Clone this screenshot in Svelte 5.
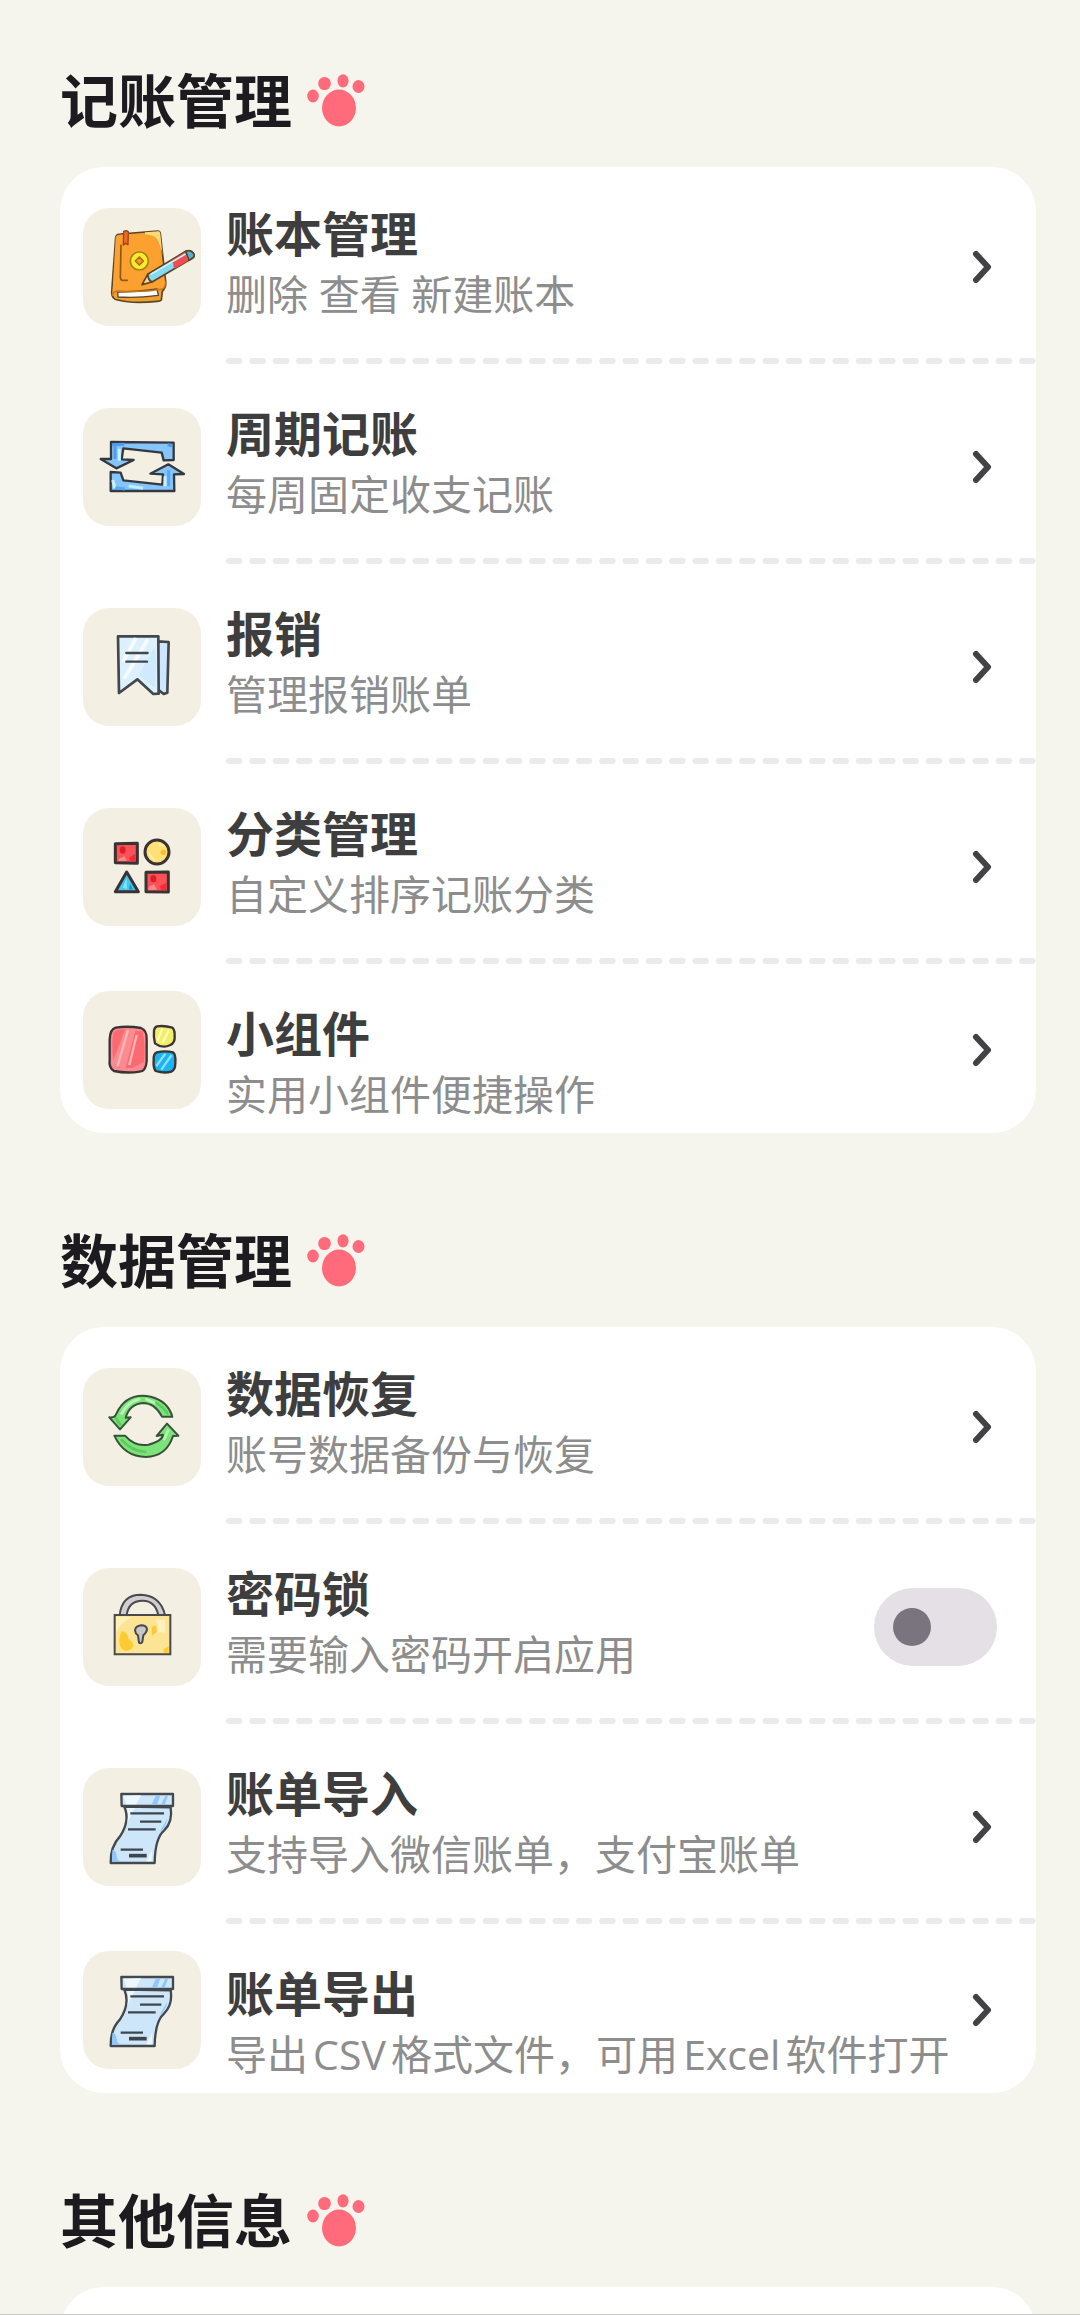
<script>
    let passwordLock = $state(false);

    const sections = [
        {
            name: "记账管理",
            items: [
                { id: "books", icon: "book", title: "账本管理", desc: "删除 查看 新建账本" },
                { id: "recurring", icon: "repeat", title: "周期记账", desc: "每周固定收支记账" },
                { id: "reimburse", icon: "bookmark", title: "报销", desc: "管理报销账单" },
                { id: "category", icon: "shapes", title: "分类管理", desc: "自定义排序记账分类" },
                { id: "widget", icon: "widget", title: "小组件", desc: "实用小组件便捷操作" },
            ],
        },
        {
            name: "数据管理",
            items: [
                { id: "restore", icon: "sync", title: "数据恢复", desc: "账号数据备份与恢复" },
                { id: "lock", icon: "lock", title: "密码锁", desc: "需要输入密码开启应用", toggle: true },
                { id: "import", icon: "bill", title: "账单导入", desc: "支持导入微信账单，支付宝账单" },
                { id: "export", icon: "bill", title: "账单导出", desc: "导出CSV格式文件，可用Excel软件打开" },
            ],
        },
        { name: "其他信息", items: [] },
    ];
</script>

{#snippet paw()}
    <svg class="paw" viewBox="0 0 58 54" aria-hidden="true">
        <ellipse cx="32" cy="34" rx="17" ry="18.5" />
        <ellipse cx="6" cy="22" rx="5.8" ry="6.4" />
        <ellipse cx="17.5" cy="9.5" rx="6.3" ry="6.6" />
        <ellipse cx="36" cy="6.8" rx="5.6" ry="6.6" />
        <ellipse cx="51.5" cy="12.5" rx="6" ry="6.4" />
    </svg>
{/snippet}

{#snippet icon(name)}
    <svg class="icon" viewBox="0 0 354 354" aria-hidden="true">
        {#if name === "book"}
            <g stroke="#5a4526" stroke-width="5" stroke-linejoin="round" stroke-linecap="round">
                <path d="M98 88Q100 78 112 78L224 69Q231 69 232 77L248 222Q250 238 238 250L235 276Q232 280 222 280Q150 288 104 276Q87 274 86 254Z" fill="#f0a02f" />
                <path d="M186 73L227 70Q231 70 232 77L239 144Q232 84 186 80Z" fill="#fbd878" stroke="none" />
                <path d="M98 88Q100 80 112 80L196 80Q224 82 229 110L246 222Q247 243 232 245L106 248Q94 248 88 262Z" fill="#fca02f" stroke="none" />
                <path d="M104 252Q160 252 222 243L226 262Q160 271 105 267Z" fill="#fff" stroke-width="4" />
                <path d="M88 262Q91 249 106 249Q180 254 238 243Q247 240 248 222" fill="none" stroke="#c7761c" stroke-width="4" />
                <path d="M114 112L112 206Q112 217 121 217L133 217" fill="none" stroke="#8b5a1a" />
                <path d="M122 70Q130 66 136 71L135 110L128 106L121 111Z" fill="#ea6a2a" stroke="#a24316" stroke-width="4" />
                <circle cx="169" cy="159" r="27" fill="#fcea2f" stroke="#a08418" />
                <path d="M169 147L181 159L169 171L157 159Z" fill="#f59d24" stroke="#a67218" />
                <path d="M194 199L308 130Q322 125 332 137Q336 145 329 150L207 222Q195 217 194 199Z" fill="#86d9ee" />
                <path d="M262 159L305 133L316 158L277 181Q268 178 272 168Z" fill="#f14d50" stroke="none" />
                <path d="M205 198L306 139" fill="none" stroke="#cdf3fa" />
                <path d="M308 130Q324 123 332 137Q336 145 329 150L318 157Z" fill="#55b1cf" />
                <path d="M177 230L194 199Q195 217 207 222Z" fill="#f8d6a2" />
            </g>
        {:else if name === "repeat"}
            <g fill="#85c5fb" stroke="#35393d" stroke-width="7" stroke-linejoin="round">
                <path d="M84 102L272 104L272 156L242 157L236 134L121 121L116 154L152 156L100 181L53 153L84 153Z" />
                <path d="M83 192L113 194L121 217L238 230L240 199L202 197L256 169L303 198L273 199L274 249L83 249Z" />
            </g>
            <g fill="none" stroke-width="9">
                <path d="M88 110L124 109M96 113V153M254 110L267 113" stroke="#4e9cf0" />
                <path d="M109 122V158M246 205V235M89 216L96 240" stroke="#c9f0fd" />
                <path d="M257 187V235M97 239L126 243" stroke="#57a8f4" />
                <path d="M137 234L180 241" stroke="#bbf0fb" />
            </g>
        {:else if name === "bookmark"}
            <g stroke="#42474c" stroke-width="8" stroke-linejoin="round" stroke-linecap="round">
                <path d="M224 100L257 102L253 254L242 258L224 244Z" fill="#cde6fb" />
                <path d="M105 85L226 85L227 257L211 258L163 214L108 255Z" fill="#ddf0fd" />
                <path d="M215 118L168 201L215 239L220 170Z" fill="#c9e6fc" stroke="none" opacity=".7" />
                <path d="M156 95L122 158M192 98L126 208" stroke="#f5fbff" stroke-width="12" />
                <path d="M130 135L194 135M130 161L192 161" fill="none" stroke-width="7" />
            </g>
        {:else if name === "shapes"}
            <g stroke="#3a3233" stroke-width="9" stroke-linejoin="round">
                <path d="M97 107L163 106L163 166L97 164Z" fill="#fb5158" />
                <circle cx="222" cy="132" r="36" fill="#fde07a" />
                <path d="M131 192L97 251L166 251Z" fill="#47c5ee" />
                <path d="M189 193L256 192L256 252L189 251Z" fill="#fb5158" />
            </g>
            <ellipse cx="119" cy="126" rx="9" ry="11" fill="#df1f27" />
            <ellipse cx="211" cy="212" rx="9" ry="11" fill="#df1f27" />
            <path d="M138 149L157 137V160H142ZM230 235L250 224V246H235Z" fill="#f52a34" />
            <path d="M108 152L124 145L132 158L106 159ZM198 236L213 229L222 245L196 246Z" fill="#fb8b8d" />
            <circle cx="241" cy="133" r="8" fill="#fbbf22" />
            <path d="M196 130Q207 145 218 158Q200 157 196 130ZM226 104Q239 107 245 117L228 115Z" fill="#fdf2a3" />
            <path d="M131 211L119 239L132 243Z" fill="#7ee4fb" />
            <path d="M141 227L150 244L138 245Z" fill="#1398d1" />
        {:else if name === "widget"}
            <g stroke="#3c3434" stroke-width="7" stroke-linejoin="round">
                <path d="M98 110Q134 104 174 111Q192 118 191 145L191 210Q189 241 170 242Q130 248 93 240Q77 231 80 205L80 145Q81 115 98 110Z" fill="#fb8b90" />
                <path d="M222 106Q245 103 268 110Q276 116 275 138Q276 155 262 162Q238 174 216 157Q211 140 213 119Q214 109 222 106Z" fill="#f0ee6b" />
                <path d="M221 184Q247 178 270 184Q279 190 277 216Q277 237 265 242Q243 248 218 240Q210 230 212 207Q211 188 221 184Z" fill="#1bb4f2" />
            </g>
            <path d="M91 125Q101 114 126 116L91 207Q85 166 91 125ZM157 119L179 121Q187 153 183 212L147 232L128 230ZM95 219L104 230L115 231" fill="#fb6a71" />
            <path d="M135 117L103 227M161 132L139 222" fill="none" stroke="#fdb6b7" stroke-width="7" />
            <path d="M238 112L223 151M258 116L239 155" fill="none" stroke="#fcfcae" stroke-width="7" />
            <path d="M247 188L220 225M266 192L235 236" fill="none" stroke="#8bdffb" stroke-width="7" />
        {:else if name === "sync"}
            <g fill="#7de27a" stroke="#37523a" stroke-width="6" stroke-linejoin="round">
                <path d="M79 148Q96 150 99 139Q130 72 203 86Q255 99 268 146L237 146Q216 105 180 105Q139 109 128 149L143 148L111 184Z" />
                <path d="M94 203L126 203Q156 237 196 230Q239 219 240 200L221 204L252 167L286 203L270 204Q251 265 189 267Q123 266 94 203Z" />
            </g>
            <g fill="none" stroke-width="8" stroke-linecap="round">
                <path d="M116 137Q135 100 168 94M190 94L216 105M244 213L255 188" stroke="#b9f6b5" />
                <path d="M220 105Q242 119 253 136M116 216Q146 249 187 252M99 151L112 170" stroke="#5ecb5e" />
            </g>
        {:else if name === "lock"}
            <g stroke="#4a4a4c" stroke-width="6">
                <path d="M110 141Q117 80 173 80Q232 82 246 141L226 141Q216 97 178 98Q136 99 131 141Z" fill="#cfcfd2" />
                <path d="M95 141H262V259H95Z" fill="#fde394" />
            </g>
            <path d="M100 147H148Q112 163 100 194ZM218 155H247V196Q229 187 217 203Q235 184 218 155Z" fill="#fff1bd" />
            <path d="M115 190Q133 188 137 214Q151 220 151 235Q143 252 121 247Q106 233 109 211ZM206 176L219 172L221 192L207 203ZM242 243L257 235V254H242Z" fill="#fccb32" />
            <path d="M168 224Q174 228 178 222L181 202Q192 192 192 184Q191 172 174 172Q158 174 156 187Q157 197 165 202Z" fill="#c7c7ca" stroke="#4a4a4c" stroke-width="6" />
        {:else if name === "bill"}
            <g stroke="#43484d" stroke-width="7" stroke-linejoin="round">
                <path d="M124 116L263 118Q270 161 243 188Q216 211 215 285L83 285Q82 235 111 205Q142 158 124 116Z" fill="#cde6fa" />
                <path d="M115 78H270V114H116Z" fill="#cde6fa" />
            </g>
            <path d="M232 82L222 110H206L219 82ZM255 83L245 110H234L247 83Z" fill="#8fc6fb" />
            <path d="M174 82L160 109H130L122 83ZM132 121L155 120L133 164Q138 139 132 121ZM208 244L206 280H190Z" fill="#edf7fe" />
            <path d="M88 246Q100 243 103 274L113 281H87ZM253 152Q249 176 228 196L222 213Q233 182 253 152Z" fill="#8fc6fb" />
            <g stroke="#3e454c" stroke-width="7">
                <path d="M142 136H243M171 161H235M135 184H218M113 245H180" />
                <path d="M138 263H191" stroke-width="11" />
            </g>
        {/if}
    </svg>
{/snippet}

{#snippet rowContent(item, last)}
    <span class="tile">{@render icon(item.icon)}</span>
    <span class="text">
        <span class="title">{item.title}</span>
        <span class="desc">{item.desc}</span>
    </span>
    {#if item.toggle}
        <input class="switch" type="checkbox" role="switch" id={item.id} bind:checked={passwordLock} />
    {:else}
        <svg class="chevron" viewBox="0 0 32 40" aria-hidden="true">
            <path d="M11 7L23 20L11 33" />
        </svg>
    {/if}
    {#if !last}
        <svg class="divider" aria-hidden="true">
            <line x1="3" y1="4" x2="100%" y2="4" pathLength="692" />
        </svg>
    {/if}
{/snippet}

<main class="page">
    {#each sections as section}
        <section class="section">
            <h2 class="heading">{section.name}{@render paw()}</h2>
            <div class="card">
                {#each section.items as item, i}
                    {@const last = i === section.items.length - 1}
                    {#if item.toggle}
                        <label class="row" class:last for={item.id}>{@render rowContent(item, last)}</label>
                    {:else}
                        <a class="row" class:last href="#{item.id}">{@render rowContent(item, last)}</a>
                    {/if}
                {/each}
            </div>
        </section>
    {/each}
</main>

<style>
    :global(body) {
        background: #f6f5ed;
    }

    .page {
        height: 100vh;
        box-sizing: border-box;
        padding: 0 44px 0 60px;
        overflow: hidden;
        border-bottom: 1px solid #c8c8c6;
        background: #f6f5ed;
        font-family: "Open Sans", "Noto Sans CJK SC", sans-serif;
    }

    .section + .section {
        margin-top: 27px;
    }

    .heading {
        display: flex;
        align-items: center;
        gap: 15px;
        margin: 0;
        padding: 69px 0 34px;
        font-size: 58px;
        line-height: 64px;
        font-weight: 700;
        color: #1c1b1f;
    }

    .paw {
        width: 58px;
        height: 54px;
        fill: #ff6b7b;
    }

    .card {
        min-height: 160px;
        border-radius: 44px;
        background: #fff;
        overflow: hidden;
    }

    /* every cell shares one grid line, the divider sits at its bottom edge */
    .row {
        display: grid;
        grid-template-columns: 118px minmax(0, 1fr) auto;
        column-gap: 25px;
        align-items: center;
        padding-left: 23px;
        color: inherit;
        text-decoration: none;
        cursor: pointer;
    }

    .tile,
    .text,
    .switch,
    .chevron,
    .divider {
        grid-row: 1;
    }

    .tile {
        grid-column: 1;
        height: 118px;
        border-radius: 26px;
        background: #f3efe3;
    }

    .icon {
        display: block;
        width: 100%;
        height: 100%;
    }

    .text {
        grid-column: 2;
        display: flex;
        flex-direction: column;
        padding: 35px 0 45px;
        white-space: nowrap;
    }

    .last .text {
        padding-bottom: 11px;
    }

    .title {
        font-size: 48px;
        line-height: 64px;
        font-weight: 700;
        color: #3e3e3e;
    }

    .desc {
        font-size: 41px;
        line-height: 56px;
        text-autospace: normal;
        color: #8d8d8d;
    }

    .chevron {
        grid-column: 3;
        width: 32px;
        height: 40px;
        margin-right: 39px;
        fill: none;
        stroke: #424244;
        stroke-width: 6;
        stroke-linecap: round;
        stroke-linejoin: round;
    }

    .switch {
        grid-column: 3;
        appearance: none;
        display: flex;
        align-items: center;
        box-sizing: border-box;
        width: 123px;
        height: 78px;
        margin: 0 39px 0 0;
        padding: 0 19px;
        border-radius: 39px;
        background: #e5e0e6;
        cursor: pointer;
    }

    .switch::before {
        content: "";
        width: 38px;
        height: 38px;
        border-radius: 50%;
        background: #79747e;
    }

    .switch:checked {
        justify-content: flex-end;
        background: #ff6b7b;
    }

    .switch:checked::before {
        background: #fff;
    }

    .divider {
        grid-column: 2 / -1;
        align-self: end;
        width: 100%;
        height: 8px;
        margin-bottom: 2px;
    }

    .divider line {
        stroke: #ebebeb;
        stroke-width: 6;
        stroke-linecap: round;
        stroke-dasharray: 9 11;
    }
</style>
